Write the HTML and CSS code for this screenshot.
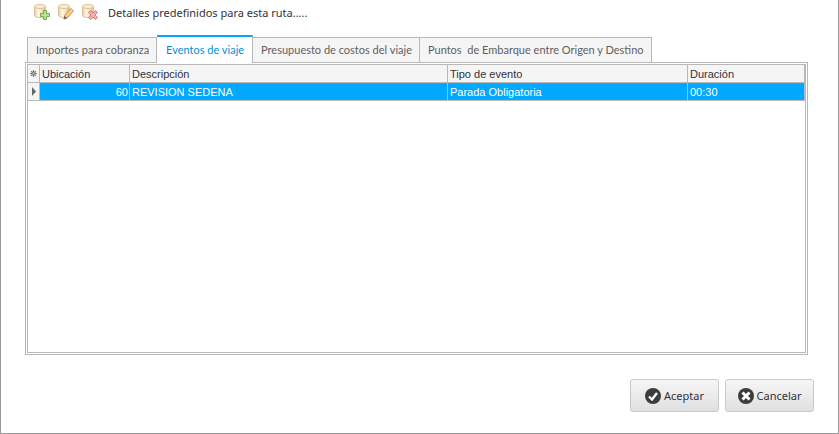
FILE: index.html
```html
<!DOCTYPE html>
<html lang="es">
<head>
  <meta charset="UTF-8">
  <meta name="viewport" content="width=device-width, initial-scale=1.0">
  <title>Detalles de la ruta</title>
  <link rel="stylesheet" href="styles.css">
</head>
<body>
  <svg class="defs" width="0" height="0" aria-hidden="true">
    <defs>
      <linearGradient id="gold">
        <stop offset="0" stop-color="#eccb9b"/>
        <stop offset=".35" stop-color="#fffaeb"/>
        <stop offset=".65" stop-color="#f7e0b5"/>
        <stop offset="1" stop-color="#e2b984"/>
      </linearGradient>
      <g id="database">
        <path d="M.5 2.500v9c0 1 2.200 2 5.500 2s5.500-1 5.500-2v-9z" fill="url(#gold)" stroke="#dfc19b"/>
        <ellipse cx="6" cy="2.500" rx="5.500" ry="2" fill="#fbecd0" stroke="#dfc19b"/>
      </g>
    </defs>
  </svg>

  <main class="window">
    <div class="toolbar">
      <button type="button" class="tool" aria-label="Agregar">
        <svg viewBox="0 0 16 16"><use href="#database"/><path d="M9.500 6.500h3v3h3v3h-3v3h-3v-3h-3v-3h3z" fill="#b5e28c" stroke="#72ad53"/></svg>
      </button>
      <button type="button" class="tool" aria-label="Editar">
        <svg viewBox="0 0 16 16"><use href="#database"/><path d="M6 14.500l1-3.500 6-6.500 2.500 2.500-6.500 7z" fill="#f3c887" stroke="#c1925a"/><path d="M8 12l6-6" stroke="#ffe5ac"/><path d="M5.500 15.500l1-3.500 2.500 2.500z" fill="#5b6470"/></svg>
      </button>
      <button type="button" class="tool" aria-label="Eliminar">
        <svg viewBox="0 0 16 16"><use href="#database"/><path d="M8.500 6.500L11 9l2.500-2.500 2 2L13 11l2.500 2.500-2 2L11 13l-2.500 2.500-2-2L9 11 6.500 8.500z" fill="#f3b0ae" stroke="#dc7474"/></svg>
      </button>
      <span class="toolbar-title">Detalles predefinidos para esta ruta.....</span>
    </div>

    <div class="tabs" role="tablist">
      <button type="button" class="tab" role="tab">Importes para cobranza</button>
      <button type="button" class="tab active" role="tab" aria-selected="true">Eventos de viaje</button>
      <button type="button" class="tab" role="tab">Presupuesto de costos del viaje</button>
      <button type="button" class="tab" role="tab">Puntos&nbsp; de Embarque entre Origen y Destino</button>
    </div>

    <div class="panel" role="tabpanel">
      <div class="grid">
        <table>
          <colgroup>
            <col class="col-mark">
            <col class="col-ubicacion">
            <col>
            <col class="col-tipo">
            <col class="col-duracion">
          </colgroup>
          <thead>
            <tr>
              <th class="mark"><svg viewBox="0 0 9 9"><path d="M4.500 1v7M1 4.500h7M2 2l5 5M7 2l-5 5" stroke="#777"/><rect x="3" y="3" width="3" height="3" fill="#bbb" stroke="#777"/></svg></th>
              <th>Ubicación</th>
              <th>Descripción</th>
              <th>Tipo de evento</th>
              <th>Duración</th>
            </tr>
          </thead>
          <tbody>
            <tr class="selected">
              <td class="mark"><svg viewBox="0 0 9 9"><path d="M3 0l4 4.500L3 9z" fill="#666"/></svg></td>
              <td class="number">60</td>
              <td>REVISION SEDENA</td>
              <td>Parada Obligatoria</td>
              <td>00:30</td>
            </tr>
          </tbody>
        </table>
      </div>
    </div>

    <div class="actions">
      <button type="button" class="btn">
        <svg viewBox="0 0 16 16"><circle cx="8" cy="8" r="8" fill="#3c3c3c"/><path d="M4 8.500l3 3L12 5" fill="none" stroke="#fff" stroke-width="2.400"/></svg>
        Aceptar
      </button>
      <button type="button" class="btn">
        <svg viewBox="0 0 16 16"><circle cx="8" cy="8" r="8" fill="#3c3c3c"/><path d="M4.500 4.500l7 7M11.500 4.500l-7 7" stroke="#fff" stroke-width="3"/></svg>
        Cancelar
      </button>
    </div>
  </main>
</body>
</html>
```

FILE: styles.css
```css
* {
  box-sizing: border-box;
}
body {
  margin: 0;
  background-color: #fff;
  color: #32323a;
  font-family: "Liberation Sans", Arial, sans-serif;
  font-size: 11px;
}
button {
  font: inherit;
  color: inherit;
}
.defs {
  position: absolute;
}
.window {
  display: flex;
  flex-direction: column;
  min-height: 100vh;
  padding: 0 24px 21px;
  border: 1px solid #999;
  border-top: 0;
}

/* Toolbar */
.toolbar {
  display: flex;
  align-items: center;
  height: 24px;
  padding-left: 9px;
}
.tool {
  width: 16px;
  height: 16px;
  margin-right: 8px;
  padding: 0;
  border: 0;
  background: none;
}
.tool svg {
  display: block;
  width: 16px;
  height: 16px;
}
.toolbar-title {
  margin-left: 2px;
  font-family: "Noto Sans", sans-serif;
}

/* Tabs */
.tabs {
  display: flex;
  align-items: flex-end;
  margin: 11px 0 0 2px;
}
.tab {
  height: 25px;
  padding: 0 7px 2px 8px;
  border: 1px solid #b8b8b8;
  border-bottom: 0;
  background-color: #f5f5f5;
  color: #606060;
  font-family: Lato, sans-serif;
  white-space: nowrap;
}
.tab + .tab {
  border-left: 0;
}
.tab.active {
  height: 28px;
  margin-bottom: -1px;
  padding: 0 8px 1px 9px;
  border-top: 2px solid #00a8ff;
  background-color: #fff;
  color: #0090d8;
  z-index: 1;
}

/* Grid */
.panel {
  display: flex;
  flex: 1;
  margin-right: 6px;
  padding: 1px;
  border: 1px solid #b8b8b8;
}
.grid {
  flex: 1;
  border: 1px solid #b8b8b8;
}
table {
  width: 100%;
  table-layout: fixed;
  border-collapse: separate;
  border-spacing: 0;
}
.col-mark {
  width: 12px;
}
.col-ubicacion {
  width: 90px;
}
.col-tipo {
  width: 240px;
}
.col-duracion {
  width: 117px;
}
th,
td {
  height: 18px;
  padding: 0 2px;
  border: solid #b8b8b8;
  border-width: 0 1px 1px 0;
  line-height: 16px;
  text-align: left;
  font-weight: normal;
  white-space: nowrap;
}
th,
.selected .mark {
  background: #f5f5f5;
}
.mark {
  padding: 0 1px;
}
.mark svg {
  display: block;
  width: 9px;
  height: 9px;
}
.number {
  padding-right: 1px;
  text-align: right;
}
/* dotted focus line along the top and bottom of the row */
.selected td:not(.mark) {
  background:
    repeating-linear-gradient(90deg, #f26a21 0 1px, #00a8ff 1px 2px) top / 100% 1px no-repeat padding-box,
    repeating-linear-gradient(90deg, #f26a21 0 1px, #00a8ff 1px 2px) bottom / 100% 1px no-repeat padding-box,
    #00a8ff;
  color: #fff;
}

/* Buttons */
.actions {
  display: flex;
  justify-content: flex-end;
  gap: 6px;
  margin-top: 24px;
}
.btn {
  display: flex;
  align-items: center;
  justify-content: center;
  gap: 3px;
  width: 89px;
  height: 33px;
  padding: 0;
  border: 1px solid #c8c8c8;
  border-radius: 3px;
  background: linear-gradient(#f6f6f6, #e0e0e0);
  font-family: "Noto Sans", sans-serif;
}
.btn svg {
  width: 16px;
  height: 16px;
}
```
